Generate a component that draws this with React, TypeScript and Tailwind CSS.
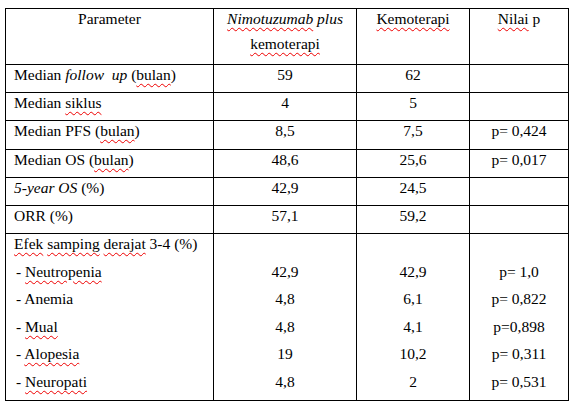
import React from 'react';

const sq = 'underline decoration-wavy decoration-[#e00] decoration-1 underline-offset-[3px]';

const rows = [
  { label: <>Median <i>follow&nbsp; up</i> (<span className={sq}>bulan</span>)</>, a: '59', b: '62', p: '' },
  { label: <>Median <span className={sq}>siklus</span></>, a: '4', b: '5', p: '' },
  { label: <>Median PFS (<span className={sq}>bulan</span>)</>, a: '8,5', b: '7,5', p: 'p= 0,424', h: 'h-[29px]' },
  { label: <>Median OS (<span className={sq}>bulan</span>)</>, a: '48,6', b: '25,6', p: 'p= 0,017' },
  { label: <><i>5-year OS</i> (%)</>, a: '42,9', b: '24,5', p: '' },
  { label: <>ORR (%)</>, a: '57,1', b: '59,2', p: '' },
];

const effects = [
  { label: <span className={sq}>Neutropenia</span>, a: '42,9', b: '42,9', p: 'p= 1,0' },
  { label: <>Anemia</>, a: '4,8', b: '6,1', p: 'p= 0,822' },
  { label: <span className={sq}>Mual</span>, a: '4,8', b: '4,1', p: 'p=0,898' },
  { label: <span className={sq}>Alopesia</span>, a: '19', b: '10,2', p: 'p= 0,311' },
  { label: <span className={sq}>Neuropati</span>, a: '4,8', b: '2', p: 'p= 0,531' },
];

const cell = 'border border-black align-top p-0';
const line = 'h-[27.6px] pt-[1px] leading-[18px] whitespace-nowrap';

export default function App() {
  return (
    <div className="w-[573px] h-[404px] bg-white pt-[8px] pl-[5px] text-black text-[15.5px] font-['Liberation_Serif','Times_New_Roman',serif]">
      <table className="border-collapse table-fixed w-[563px]">
        <colgroup>
          <col className="w-[208px]" />
          <col className="w-[143px]" />
          <col className="w-[113px]" />
          <col className="w-[99px]" />
        </colgroup>
        <tbody>
          <tr className="h-[56px]">
            <td className={`${cell} text-center`}>
              <div className="h-[25px] pt-[1px] leading-[18px]">Parameter</div>
            </td>
            <td className={`${cell} text-center`}>
              <div className="h-[25px] pt-[1px] leading-[18px]"><i><span className={sq}>Nimotuzumab</span> plus</i></div>
              <div className="h-[25px] pt-[1px] leading-[18px]"><span className={sq}>kemoterapi</span></div>
            </td>
            <td className={`${cell} text-center`}>
              <div className="h-[25px] pt-[1px] leading-[18px]"><span className={sq}>Kemoterapi</span></div>
            </td>
            <td className={`${cell} text-center`}>
              <div className="h-[25px] pt-[1px] leading-[18px]"><span className={sq}>Nilai</span> p</div>
            </td>
          </tr>
          {rows.map((r, i) => (
            <tr key={i} className={r.h ?? 'h-[28px]'}>
              <td className={`${cell} pl-[8px]`}><div className="pt-[1px] leading-[18px] whitespace-nowrap">{r.label}</div></td>
              <td className={`${cell} text-center`}><div className="pt-[1px] leading-[18px]">{r.a}</div></td>
              <td className={`${cell} text-center`}><div className="pt-[1px] leading-[18px]">{r.b}</div></td>
              <td className={`${cell} text-center`}><div className="pt-[1px] leading-[18px]">{r.p}</div></td>
            </tr>
          ))}
          <tr className="h-[166px]">
            <td className={`${cell} pl-[8px]`}>
              <div className={line}>
                <span className={sq}>Efek</span> <span className={sq}>samping</span> <span className={sq}>derajat</span> 3-4 (%)
              </div>
              {effects.map((e, i) => (
                <div key={i} className={`${line} pl-[2px]`}>- {e.label}</div>
              ))}
            </td>
            <td className={`${cell} text-center`}>
              <div className={line}></div>
              {effects.map((e, i) => <div key={i} className={line}>{e.a}</div>)}
            </td>
            <td className={`${cell} text-center`}>
              <div className={line}></div>
              {effects.map((e, i) => <div key={i} className={line}>{e.b}</div>)}
            </td>
            <td className={`${cell} text-center`}>
              <div className={line}></div>
              {effects.map((e, i) => <div key={i} className={line}>{e.p}</div>)}
            </td>
          </tr>
        </tbody>
      </table>
    </div>
  );
}
